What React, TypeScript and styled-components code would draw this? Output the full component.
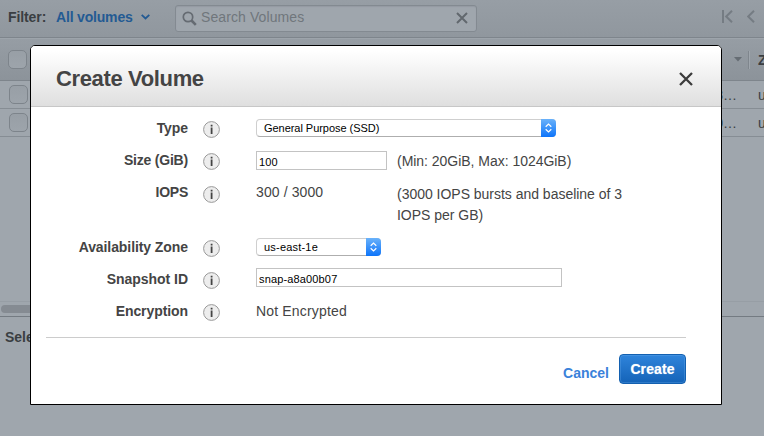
import React from "react";
import styled, { createGlobalStyle } from "styled-components";

const GlobalStyle = createGlobalStyle`
  * { box-sizing: border-box; }
  body {
    margin: 0;
    overflow: hidden;
    background: #9fa6ad;
    font-family: "Liberation Sans", Arial, sans-serif;
    font-size: 14px;
    color: #444;
  }
  input, button { font-family: inherit; }
`;

const Page = styled.div`
  position: relative;
  width: 764px;
  height: 436px;
  overflow: hidden;
  display: flex;
  flex-direction: column;
  background: #9fa6ad;
  color: #3a3e42;
`;

const Toolbar = styled.div`
  height: 38px;
  flex: none;
  display: flex;
  align-items: center;
  padding: 0 8px 4px 8px;
  background: linear-gradient(#979ea5, #90979e);
  border-bottom: 1px solid #7e858c;
`;

const FilterLabel = styled.span<{ $w: number; $spacing: number; $link?: boolean }>`
  width: ${(p) => p.$w}px;
  white-space: nowrap;
  font-weight: bold;
  letter-spacing: ${(p) => p.$spacing}px;
  color: ${(p) => (p.$link ? "#235a93" : "inherit")};
`;

const SearchBox = styled.div`
  width: 302px;
  height: 27px;
  margin: 3px 0 0 25px;
  padding: 0 8px 0 6px;
  display: flex;
  align-items: center;
  border: 1px solid #838a91;
  border-radius: 3px;
  background: #9fa6ad;
  box-shadow: inset 0 1px 1px #949ba2;
  color: #70767c;
`;

const SearchText = styled.span`
  flex: 1;
  margin-left: 4px;
  padding-bottom: 2px;
  letter-spacing: 0.1px;
`;

const Pager = styled.div`
  margin-left: auto;
  display: flex;
  gap: 14px;
`;

const TableRow = styled.div<{ $head?: boolean }>`
  flex: none;
  height: ${(p) => (p.$head ? 43 : 28)}px;
  display: flex;
  align-items: center;
  padding-left: ${(p) => (p.$head ? 8 : 9)}px;
  border-top: ${(p) => (p.$head ? "1px solid #9da4ab" : "0")};
  border-bottom: 1px solid ${(p) => (p.$head ? "#7e858c" : "#868d94")};
  background: ${(p) => (p.$head ? "linear-gradient(#969da4, #8c939a)" : "#9fa6ad")};
`;

const Check = styled.span`
  width: 19px;
  height: 19px;
  border: 1px solid #7d848b;
  border-radius: 5px;
  background: linear-gradient(#989fa6, #9da4ab);
`;

const TailCell = styled.span`
  width: 50px;
  margin-left: auto;
  text-align: right;
`;

const ZoneCell = styled.span<{ $head?: boolean }>`
  width: ${(p) => (p.$head ? 14 : 27)}px;
  padding-left: ${(p) => (p.$head ? 8 : 21)}px;
  overflow: hidden;
  font-weight: ${(p) => (p.$head ? "bold" : "normal")};
`;

const SortIcon = styled.svg`
  margin: 0 6px 0 auto;
`;

const HeadDivider = styled.span`
  width: 2px;
  height: 18px;
  border-left: 1px solid #7f868d;
  border-right: 1px solid #9fa6ad;
`;

const TableSpace = styled.div`
  flex: none;
  height: 164px;
`;

const ScrollTrack = styled.div`
  flex: none;
  height: 16px;
  padding: 3px 1px;
  border-top: 1px solid #979ea5;
  border-bottom: 1px solid #747b82;
`;

const ScrollThumb = styled.div`
  width: 420px;
  height: 8px;
  border-radius: 4px;
  background: #858b92;
`;

const Selection = styled.div`
  padding: 12px 5px;
  font-weight: bold;
`;

const Dialog = styled.section`
  position: absolute;
  left: 30px;
  top: 45px;
  width: 692px;
  height: 360px;
  border: 1px solid #000;
  border-radius: 5px 5px 0 0;
  background: #fff;
  overflow: hidden;
  color: #444;
`;

const DialogHeader = styled.header`
  height: 61px;
  display: flex;
  align-items: center;
  justify-content: space-between;
  padding: 5px 28px 0 25px;
  border-bottom: 1px solid #c7c7c7;
  background: linear-gradient(#fff 8%, #dfdfdf);
`;

const Title = styled.h1`
  margin: 0;
  font-size: 22px;
  line-height: 26px;
  letter-spacing: -0.36px;
`;

const CloseButton = styled.button`
  display: flex;
  padding: 0;
  border: 0;
  background: none;
`;

const Form = styled.div`
  padding-top: 5px;
`;

const FormRow = styled.div<{ $h?: number }>`
  height: ${(p) => p.$h ?? 32}px;
  display: grid;
  grid-template-columns: 157px 68px 141px 1fr;
  align-items: start;
  line-height: 21px;
`;

const Label = styled.label<{ $spacing?: number }>`
  padding-top: 6px;
  text-align: right;
  font-weight: bold;
  white-space: nowrap;
  letter-spacing: ${(p) => p.$spacing ?? -0.08}px;
`;

const InfoBadge = styled.svg<{ $top?: number }>`
  display: block;
  margin: ${(p) => p.$top ?? 9}px 0 0 15px;
`;

const Value = styled.span<{ $spacing?: number }>`
  padding-top: 6px;
  white-space: nowrap;
  letter-spacing: ${(p) => p.$spacing ?? 0}px;
`;

const Note = styled.span<{ $top: number; $spacing: number }>`
  width: 240px;
  padding-top: ${(p) => p.$top}px;
  letter-spacing: ${(p) => p.$spacing}px;
`;

const SelectBox = styled.div<{ $w: number }>`
  width: ${(p) => p.$w}px;
  height: 18px;
  margin-top: 7px;
  display: flex;
  justify-content: space-between;
  border: 1px solid #cfcfcf;
  border-bottom-color: #aeaeae;
  border-radius: 4px;
  background: #fff;
  font-size: 11px;
  line-height: 17px;
  color: #000;
`;

const SelectText = styled.span<{ $spacing: number }>`
  padding-left: 7px;
  white-space: nowrap;
  letter-spacing: ${(p) => p.$spacing}px;
`;

const Stepper = styled.span`
  width: 15px;
  height: 18px;
  margin: -1px -1px 0 0;
  display: flex;
  align-items: center;
  justify-content: center;
  border-radius: 0 4px 4px 0;
  background: linear-gradient(#6ab2fa, #0d74fa);
`;

const TextInput = styled.input<{ $w: number; $spacing: number; $top: number }>`
  width: ${(p) => p.$w}px;
  height: 19px;
  margin: ${(p) => p.$top}px 0 0;
  padding: 2px 2px 0;
  border: 1px solid #c3c3c3;
  border-radius: 0;
  outline: 0;
  font-size: 11px;
  letter-spacing: ${(p) => p.$spacing}px;
  color: #000;
`;

const Footer = styled.footer`
  margin: 10px 35px 0 15px;
  padding-top: 16px;
  border-top: 1px solid #ccc;
  display: flex;
  justify-content: flex-end;
  gap: 10px;
`;

const CancelLink = styled.a`
  padding-top: 11px;
  font-weight: bold;
  line-height: 17px;
  letter-spacing: 0;
  color: #3a82da;
`;

const PrimaryButton = styled.button`
  width: 67px;
  height: 30px;
  padding: 0;
  border: 1px solid #1360b0;
  border-radius: 4px;
  background: linear-gradient(#2f84db, #1463b8);
  box-shadow: inset 0 0 0 1px rgba(110, 175, 240, 0.3);
  font-size: 14px;
  font-weight: bold;
  letter-spacing: 0.1px;
  text-shadow: 0 0 1px rgba(255, 255, 255, 0.6);
  color: #fff;
`;

const Info = ({ top }: { top?: number }) => (
  <InfoBadge $top={top} width="17" height="17" viewBox="0 0 17 17">
    <circle cx="8.5" cy="8.5" r="7.9" fill="#ededed" stroke="#999" />
    <path d="M7.7 3.7h1.8v1.8H7.7zM7.7 6.6h1.8V13H7.7z" fill="#444" />
  </InfoBadge>
);

const Select = ({ width, text, spacing }: { width: number; text: string; spacing: number }) => (
  <SelectBox $w={width}>
    <SelectText $spacing={spacing}>{text}</SelectText>
    <Stepper>
      <svg width="9" height="12" viewBox="0 0 9 12" fill="none" stroke="#fff" strokeWidth="1.2">
        <path d="M1.7 4.7 4.5 2l2.8 2.7M1.7 7.3 4.5 10l2.8-2.7" />
      </svg>
    </Stepper>
  </SelectBox>
);

const Cross = ({ size, stroke, color }: { size: number; stroke: number; color: string }) => (
  <svg width={size} height={size} viewBox={`0 0 ${size} ${size}`}>
    <path
      d={`M1 1 ${size - 1} ${size - 1}M${size - 1} 1 1 ${size - 1}`}
      stroke={color}
      strokeWidth={stroke}
    />
  </svg>
);

const volumes = [
  { tail: "8…", zone: "us" },
  { tail: "0…", zone: "us" },
];

export default function App() {
  return (
    <>
      <GlobalStyle />
      <Page>
        <Toolbar>
          <FilterLabel $w={48} $spacing={-0.1}>Filter:</FilterLabel>
          <FilterLabel $w={85} $spacing={-0.18} $link>All volumes</FilterLabel>
          <svg width="9" height="6" viewBox="0 0 9 6" fill="none" stroke="#235a93" strokeWidth="1.8">
            <path d="m.7.8 3.8 3.6L8.3.8" />
          </svg>
          <SearchBox>
            <svg width="15" height="15" viewBox="0 0 15 15" fill="none" stroke="#656b72">
              <circle cx="6" cy="6" r="4.7" strokeWidth="1.7" />
              <path d="m9.5 9.5 4.3 4.3" strokeWidth="2.6" />
            </svg>
            <SearchText>Search Volumes</SearchText>
            <Cross size={12} stroke={2} color="#62686e" />
          </SearchBox>
          <Pager>
            <svg width="11" height="13" viewBox="0 0 11 13" fill="none" stroke="#757c83" strokeWidth="2">
              <path d="M1 0v13M10 .8 4.2 6.5 10 12.2" />
            </svg>
            <svg width="9" height="13" viewBox="0 0 9 13" fill="none" stroke="#757c83" strokeWidth="2">
              <path d="M7 .8 1.2 6.5 7 12.2" />
            </svg>
          </Pager>
        </Toolbar>
        <TableRow $head>
          <Check />
          <SortIcon width="8" height="5" viewBox="0 0 8 5">
            <path d="M0 0h8L4 4.6z" fill="#666d74" />
          </SortIcon>
          <HeadDivider />
          <ZoneCell $head>Z</ZoneCell>
        </TableRow>
        {volumes.map((v, i) => (
          <TableRow key={i}>
            <Check />
            <TailCell>{v.tail}</TailCell>
            <ZoneCell>{v.zone}</ZoneCell>
          </TableRow>
        ))}
        <TableSpace />
        <ScrollTrack>
          <ScrollThumb />
        </ScrollTrack>
        <Selection>Select</Selection>

        <Dialog>
          <DialogHeader>
            <Title>Create Volume</Title>
            <CloseButton aria-label="Close">
              <Cross size={14} stroke={2.3} color="#3c3c3c" />
            </CloseButton>
          </DialogHeader>
          <Form>
            <FormRow>
              <Label>Type</Label>
              <Info />
              <Select width={300} text="General Purpose (SSD)" spacing={-0.04} />
            </FormRow>
            <FormRow>
              <Label $spacing={-0.2}>Size (GiB)</Label>
              <Info />
              <TextInput $w={131} $top={7} $spacing={0.1} defaultValue="100" />
              <Note $top={7} $spacing={-0.03}>(Min: 20GiB, Max: 1024GiB)</Note>
            </FormRow>
            <FormRow $h={55}>
              <Label $spacing={-0.25}>IOPS</Label>
              <Info top={10} />
              <Value $spacing={0.1}>300 / 3000</Value>
              <Note $top={8} $spacing={-0.02}>(3000 IOPS bursts and baseline of 3 IOPS per GB)</Note>
            </FormRow>
            <FormRow>
              <Label>Availability Zone</Label>
              <Info />
              <Select width={125} text="us-east-1e" spacing={0.2} />
            </FormRow>
            <FormRow>
              <Label $spacing={-0.03}>Snapshot ID</Label>
              <Info />
              <TextInput $w={306} $top={5} $spacing={0.15} defaultValue="snap-a8a00b07" />
            </FormRow>
            <FormRow>
              <Label>Encryption</Label>
              <Info />
              <Value $spacing={0.17}>Not Encrypted</Value>
            </FormRow>
          </Form>
          <Footer>
            <CancelLink>Cancel</CancelLink>
            <PrimaryButton>Create</PrimaryButton>
          </Footer>
        </Dialog>
      </Page>
    </>
  );
}
